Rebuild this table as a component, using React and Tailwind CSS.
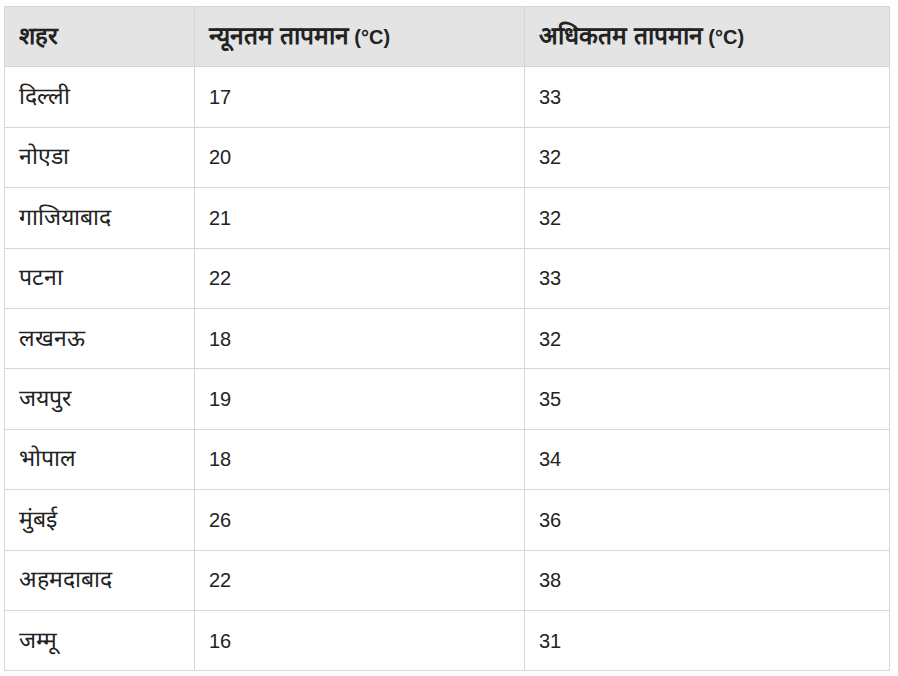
import React from "react";

const rows = [
  ["दिल्ली", "17", "33"],
  ["नोएडा", "20", "32"],
  ["गाजियाबाद", "21", "32"],
  ["पटना", "22", "33"],
  ["लखनऊ", "18", "32"],
  ["जयपुर", "19", "35"],
  ["भोपाल", "18", "34"],
  ["मुंबई", "26", "36"],
  ["अहमदाबाद", "22", "38"],
  ["जम्मू", "16", "31"],
];

const Dev = ({ children, cls = "text-[24px]" }) => <span className={cls + " leading-none"}>{children}</span>;

export default function App() {
  return (
    <div className="bg-white w-[898px] h-[676px] pt-[6px] pl-[4px] font-['Liberation_Sans',Arial,sans-serif] text-[20px] text-[#222]">
      <table className="w-[885px] border-collapse border border-[#d6d6d6] table-fixed">
        <colgroup>
          <col className="w-[190px]" />
          <col className="w-[330px]" />
          <col className="w-[365px]" />
        </colgroup>
        <thead>
          <tr className="h-[60.4px] bg-[#e4e4e4]">
            <th className="border border-[#d6d6d6] text-left font-bold px-[14px] align-middle"><Dev>शहर</Dev></th>
            <th className="border border-[#d6d6d6] text-left font-bold px-[14px] align-middle"><Dev cls="text-[24.5px]">न्यूनतम तापमान</Dev> (°C)</th>
            <th className="border border-[#d6d6d6] text-left font-bold px-[14px] align-middle"><Dev cls="text-[24.5px]">अधिकतम तापमान</Dev> (°C)</th>
          </tr>
        </thead>
        <tbody>
          {rows.map((r, i) => (
            <tr key={i} className="h-[60.4px]">
              <td className="border border-[#d6d6d6] px-[14px] align-middle"><Dev cls="text-[23px]">{r[0]}</Dev></td>
              <td className="border border-[#d6d6d6] px-[14px] align-middle">{r[1]}</td>
              <td className="border border-[#d6d6d6] px-[14px] align-middle">{r[2]}</td>
            </tr>
          ))}
        </tbody>
      </table>
    </div>
  );
}
